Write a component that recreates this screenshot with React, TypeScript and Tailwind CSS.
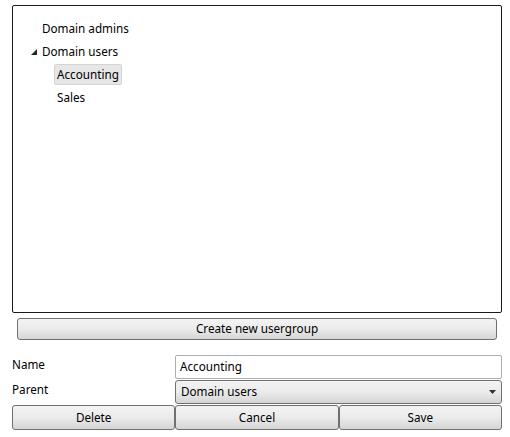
const font = { fontFamily: '"Noto Sans", "Open Sans", sans-serif' };

const btn =
  'flex items-center justify-center rounded-[3px] border border-[#707070] bg-gradient-to-b from-[#f3f3f3] via-[#ebebeb] to-[#d5d5d5] text-[11.7px] text-black';

const Expander: React.FC = () => (
  <svg width="6" height="6" viewBox="0 0 6 6" className="shrink-0">
    <polygon points="6,0 6,6 0,6" fill="#262626" />
  </svg>
);

const App: React.FC = () => {
  return (
    <div style={font} className="flex h-[437px] w-[510px] flex-col bg-white pl-[12px] pr-[8px] pt-[5px] text-[11.7px] text-black">
      <div className="h-[308px] rounded-[2px] border border-[#1a1a1a] pt-[12px]">
        <div className="flex h-[22px] items-center pl-[29px]">Domain admins</div>
        <div className="flex h-[23px] items-center gap-[5px] pl-[18px]">
          <Expander />
          <span>Domain users</span>
        </div>
        <div className="flex h-[23px] items-center pl-[41px]">
          <span className="flex h-[21px] items-center rounded-[2px] border border-[#d4d4d4] bg-[#e6e6e6] px-[2px]">
            Accounting
          </span>
        </div>
        <div className="flex h-[24px] items-center pl-[44px]">Sales</div>
      </div>

      <div className={`${btn} mx-[5px] mt-[5px] h-[22px]`}>Create new usergroup</div>

      <div className="mt-[15px] grid grid-cols-[163px_1fr]">
        <div className="pt-[1px] leading-[16px]">Name</div>
        <div className="flex h-[24px] items-center rounded-[2px] border border-[#abadb3] bg-white px-[4px]">Accounting</div>
        <div className="pt-[2px] leading-[16px]">Parent</div>
        <div className={`${btn} mt-[1px] h-[24px] !justify-between px-[5px]`}>
          <span>Domain users</span>
          <svg width="7" height="4" viewBox="0 0 7 4">
            <polygon points="0,0 7,0 3.5,4" fill="#333" />
          </svg>
        </div>
      </div>

      <div className="mt-[1px] grid h-[25px] grid-cols-3">
        <div className={btn}>Delete</div>
        <div className={btn}>Cancel</div>
        <div className={btn}>Save</div>
      </div>
    </div>
  );
};

export default App;
